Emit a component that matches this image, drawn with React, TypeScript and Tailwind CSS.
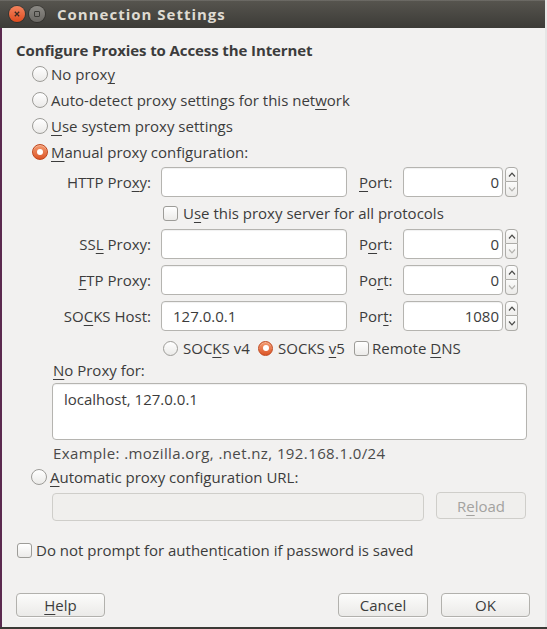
import React from "react";

const M = ({ children }: { children: React.ReactNode }) => (
  <span className="underline decoration-1 underline-offset-[3px]">{children}</span>
);

function Radio({ checked = false, size = 16 }: { checked?: boolean; size?: number }) {
  if (checked) {
    return (
      <span
        className="flex shrink-0 items-center justify-center rounded-full border border-[#c0461c] bg-gradient-to-b from-[#f39a6e] to-[#dc5526] shadow-[inset_0_1px_0_rgba(255,255,255,0.3)]"
        style={{ width: size, height: size }}
      >
        <span className="block h-[6px] w-[6px] rounded-full bg-white" />
      </span>
    );
  }
  return (
    <span
      className="block shrink-0 rounded-full border border-[#9d9c98] bg-gradient-to-b from-[#ffffff] to-[#ebeae8]"
      style={{ width: size, height: size }}
    />
  );
}

function Check() {
  return (
    <span className="block h-[15px] w-[15px] shrink-0 rounded-[3px] border border-[#9d9c98] bg-gradient-to-b from-[#ffffff] to-[#ecebe9]" />
  );
}

function Chevron({ up, dim }: { up?: boolean; dim?: boolean }) {
  return (
    <svg width="8" height="5" viewBox="0 0 8 5">
      <path
        d={up ? "M1 4.5 L4 1.2 L7 4.5" : "M1 0.5 L4 3.8 L7 0.5"}
        fill="none"
        stroke={dim ? "#b3b2ae" : "#4a4a48"}
        strokeWidth="1.2"
      />
    </svg>
  );
}

function Spinner({ downDim = true }: { downDim?: boolean }) {
  return (
    <div className="ml-[2px] flex h-[30px] w-[13px] flex-col">
      <div className="flex h-[15px] items-center justify-center rounded-t-[4px] border border-[#adaca8] bg-gradient-to-b from-[#fdfdfd] to-[#eeedeb]">
        <Chevron up />
      </div>
      <div className="flex h-[15px] items-center justify-center rounded-b-[4px] border border-t-0 border-[#adaca8] bg-gradient-to-b from-[#fbfbfa] to-[#ecebe9]">
        <Chevron dim={downDim} />
      </div>
    </div>
  );
}

function Input({ className = "", children }: { className?: string; children?: React.ReactNode }) {
  return (
    <div
      className={
        "flex items-center rounded-[4px] border border-[#b5b4b0] bg-white shadow-[inset_0_1px_1px_rgba(0,0,0,0.06)] " +
        className
      }
    >
      {children}
    </div>
  );
}

function ProxyRow({
  label,
  port,
  value,
  portValue,
  downDim = true,
}: {
  label: React.ReactNode;
  port: React.ReactNode;
  value?: string;
  portValue: string;
  downDim?: boolean;
}) {
  return (
    <div className="flex h-[30px] items-center">
      <div className="w-[98px] text-right">{label}</div>
      <Input className="ml-[10px] h-full w-[186px] pl-[11px]">{value}</Input>
      <div className="ml-[12px] w-[34px]">{port}</div>
      <Input className="ml-[10px] h-full w-[100px] justify-end pr-[3px]">{portValue}</Input>
      <Spinner downDim={downDim} />
    </div>
  );
}

function Button({
  children,
  className = "",
  disabled = false,
}: {
  children: React.ReactNode;
  className?: string;
  disabled?: boolean;
}) {
  return (
    <div
      className={
        "flex items-center justify-center rounded-[4px] border " +
        (disabled
          ? "border-[#cfceca] bg-[#f0efed] text-[#a3a29f] "
          : "border-[#b2b1ad] bg-gradient-to-b from-[#fcfcfb] to-[#ebeae8] text-[#3c3c3c] shadow-[0_1px_0_rgba(255,255,255,0.8)] ") +
        className
      }
    >
      {children}
    </div>
  );
}

export default function App() {
  return (
    <div className="flex h-[629px] w-[547px] flex-col overflow-hidden bg-[#e4e4e4] font-['Open_Sans','DejaVu_Sans',sans-serif] text-[15px] leading-[18px] text-[#3c3c3c]">
      <div className="flex h-[627px]">
        <div className="flex w-[545px] flex-col">
          {/* Title bar */}
          <div className="flex h-[28px] shrink-0 items-center bg-gradient-to-b from-[#57554f] to-[#3c3b37] shadow-[inset_0_1px_0_rgba(255,255,255,0.12)]">
            <div className="ml-[9px] flex h-[16px] w-[16px] items-center justify-center rounded-full bg-gradient-to-b from-[#f4835c] to-[#df4a1b] shadow-[0_0_0_1px_rgba(0,0,0,0.25)]">
              <svg width="6" height="6" viewBox="0 0 6 6">
                <path d="M0.8 0.8 L5.2 5.2 M5.2 0.8 L0.8 5.2" stroke="#3a2a22" strokeWidth="1.3" />
              </svg>
            </div>
            <div className="ml-[4px] flex h-[16px] w-[16px] items-center justify-center rounded-full bg-gradient-to-b from-[#8c8a85] to-[#6a6864] shadow-[0_0_0_1px_rgba(0,0,0,0.25)]">
              <span className="block h-[6px] w-[6px] rounded-[1px] border border-[#3b3a36]" />
            </div>
            <div className="ml-[12px] text-[15px] font-bold tracking-[1px] text-[#dfdbd2]">Connection Settings</div>
          </div>

          {/* Body */}
          <div className="flex flex-1 flex-col border-l-2 border-[#5b2a4f] bg-[#f2f1f0]">
            <div className="ml-[14px] mt-[11px] flex h-[22px] items-center text-[15px] font-bold tracking-[-0.1px]">
              Configure Proxies to Access the Internet
            </div>

            <div className="ml-[30px] flex h-[26px] items-center gap-[3px]">
              <Radio />
              <span>
                No prox<M>y</M>
              </span>
            </div>
            <div className="ml-[30px] flex h-[26px] items-center gap-[3px]">
              <Radio />
              <span>
                Auto-detect proxy settings for this net<M>w</M>ork
              </span>
            </div>
            <div className="ml-[30px] flex h-[26px] items-center gap-[3px]">
              <Radio />
              <span>
                <M>U</M>se system proxy settings
              </span>
            </div>
            <div className="ml-[30px] flex h-[26px] items-center gap-[3px]">
              <Radio checked />
              <span>
                <M>M</M>anual proxy configuration:
              </span>
            </div>

            <div className="ml-[51px] mt-[2px] flex flex-col">
              <ProxyRow
                label={
                  <>
                    HTTP Pro<M>x</M>y:
                  </>
                }
                port={
                  <>
                    <M>P</M>ort:
                  </>
                }
                portValue="0"
              />
              <div className="ml-[110px] flex h-[32px] items-center gap-[5px]">
                <Check />
                <span>
                  U<M>s</M>e this proxy server for all protocols
                </span>
              </div>
              <ProxyRow
                label={
                  <>
                    SS<M>L</M> Proxy:
                  </>
                }
                port={
                  <>
                    P<M>o</M>rt:
                  </>
                }
                portValue="0"
              />
              <div className="mt-[6px]">
                <ProxyRow
                  label={
                    <>
                      <M>F</M>TP Proxy:
                    </>
                  }
                  port={
                    <>
                      Po<M>r</M>t:
                    </>
                  }
                  portValue="0"
                />
              </div>
              <div className="mt-[6px]">
                <ProxyRow
                  label={
                    <>
                      SO<M>C</M>KS Host:
                    </>
                  }
                  port={
                    <>
                      Por<M>t</M>:
                    </>
                  }
                  value="127.0.0.1"
                  portValue="1080"
                  downDim={false}
                />
              </div>
              <div className="ml-[110px] mt-[2px] flex h-[30px] items-center">
                <div className="flex w-[95px] items-center gap-[5px]">
                  <Radio size={15} />
                  <span>
                    SOC<M>K</M>S v4
                  </span>
                </div>
                <div className="flex w-[96px] items-center gap-[5px]">
                  <Radio size={15} checked />
                  <span>
                    SOCKS <M>v</M>5
                  </span>
                </div>
                <div className="flex items-center gap-[3px]">
                  <Check />
                  <span>
                    Remote <M>D</M>NS
                  </span>
                </div>
              </div>
            </div>

            <div className="ml-[51px] flex h-[14px] items-center">
              <span>
                <M>N</M>o Proxy for:
              </span>
            </div>
            <div className="ml-[50px] mt-[6px] h-[57px] w-[475px] rounded-[4px] border border-[#b5b4b0] bg-white pl-[11px] pt-[6px] shadow-[inset_0_1px_1px_rgba(0,0,0,0.06)]">
              localhost, 127.0.0.1
            </div>
            <div className="ml-[51px] flex h-[26px] items-center tracking-[0.4px] text-[#4a4a4a]">
              Example: .mozilla.org, .net.nz, 192.168.1.0/24
            </div>
            <div className="ml-[29px] flex h-[22px] items-center gap-[3px]">
              <Radio />
              <span>
                <M>A</M>utomatic proxy configuration URL:
              </span>
            </div>
            <div className="ml-[50px] mt-[4px] flex h-[29px] items-start">
              <div className="mt-[1px] h-[28px] w-[372px] rounded-[4px] border border-[#cfceca] bg-[#f0efed]" />
              <Button disabled className="ml-[12px] h-[27px] w-[90px]">
                <span>
                  R<M>e</M>load
                </span>
              </Button>
            </div>

            <div className="ml-[15px] mt-[17px] flex h-[24px] items-center gap-[4px]">
              <Check />
              <span>
                Do not prompt for authent<M>i</M>cation if password is saved
              </span>
            </div>

            <div className="ml-[14px] mr-[15px] mt-[31px] flex h-[24px]">
              <Button className="h-full w-[89px]">
                <span>
                  <M>H</M>elp
                </span>
              </Button>
              <div className="flex-1" />
              <Button className="h-full w-[90px]">Cancel</Button>
              <Button className="ml-[13px] h-full w-[89px]">OK</Button>
            </div>
          </div>
        </div>
        <div className="flex-1 bg-[#e6e6e6]" />
      </div>
      <div className="h-[2px] bg-[#3b3a36]" />
    </div>
  );
}
